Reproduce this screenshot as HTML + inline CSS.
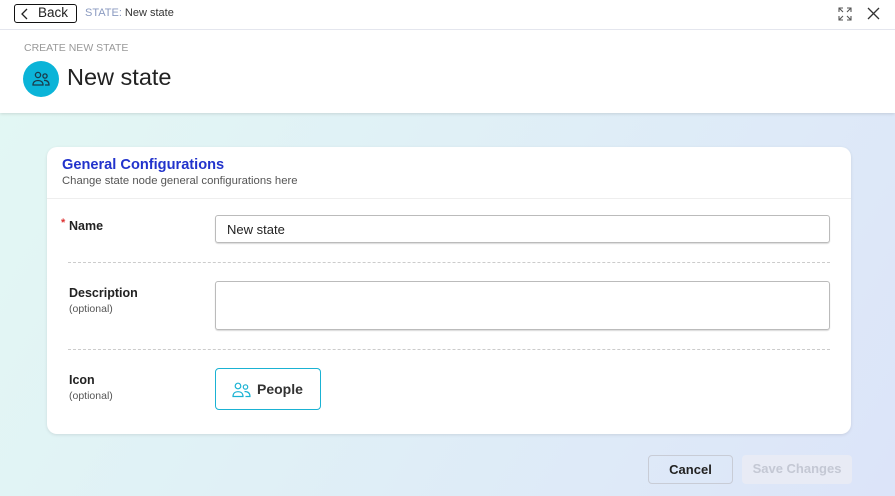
<!DOCTYPE html>
<html><head><style>
*{box-sizing:border-box;margin:0;padding:0}
body{width:895px;height:496px;overflow:hidden;font-family:"Liberation Sans",sans-serif;background:linear-gradient(120deg,#e3f8f3 0%,#e0f1f6 40%,#dce4f9 100%);position:relative;color:#222}
.top{position:absolute;left:0;top:0;width:895px;height:113px;background:#fff;box-shadow:0 1px 3px rgba(0,0,0,.12)}
.bar{height:30px;border-bottom:1px solid #e4e6ee;position:relative}
.back{position:absolute;left:14px;top:4px;width:63px;height:19px;border:1.5px solid #111;border-radius:3px;font-size:13.5px;line-height:16px;padding-left:23px;color:#222}
.back svg{position:absolute;left:5px;top:3px}
.crumb{position:absolute;left:85px;top:7px;font-size:11px;color:#333}
.crumb b{font-weight:normal;color:#8a9ac0}
.sub{position:absolute;left:24px;top:42px;font-size:10.5px;color:#999}
.av{position:absolute;left:23px;top:61px;width:36px;height:36px;border-radius:50%;background:#0bb4d8}
.ttl{position:absolute;left:67px;top:64px;font-size:23.5px;color:#222}
.card{position:absolute;left:47px;top:147px;width:804px;height:287px;background:#fff;border-radius:10px;box-shadow:0 1px 3px rgba(0,0,0,.1)}
.ch{height:52px;border-bottom:1px solid #eee;padding:10px 15px}
.ch h3{font-size:14.6px;color:#2233cc;font-weight:bold}
.ch p{font-size:11.3px;color:#555;margin-top:2px}
.lbl{position:absolute;left:22px;font-size:12.5px;font-weight:bold;color:#222}
.lbl small{display:block;font-weight:normal;font-size:10.5px;color:#555;margin-top:3px}
.inp{position:absolute;left:168px;width:615px;border:1px solid #bbb;border-radius:3px;box-shadow:0 1px 1px rgba(0,0,0,.15)}
.dash{position:absolute;left:21px;width:762px;border-top:1px dashed #ccc}
.btn{position:absolute;border-radius:4px;font-size:13px;font-weight:bold;text-align:center;line-height:28px}
</style></head><body>
<div class="top">
<div class="bar">
<div class="back"><svg width="10" height="12" viewBox="0 0 10 12"><path d="M7 1L2 6l5 5" fill="none" stroke="#222" stroke-width="1.3"/></svg>Back</div>
<div class="crumb"><b>STATE:</b> New state</div>
<svg style="position:absolute;left:838px;top:7px" width="14" height="14" viewBox="0 0 14 14" fill="none" stroke="#555" stroke-width="1.1"><path d="M1 5V1h4M1 1l4 4M13 5V1H9M13 1L9 5M1 9v4h4M1 13l4-4M13 9v4H9M13 13L9 9"/></svg>
<svg style="position:absolute;left:867px;top:7px" width="13" height="13" viewBox="0 0 13 13" stroke="#333" stroke-width="1.3"><path d="M1 1l11 11M12 1L1 12"/></svg>
</div>
<div class="sub">CREATE NEW STATE</div>
<div class="av"><svg style="position:absolute;left:9px;top:10px" width="18" height="16" viewBox="0 0 18 16" fill="none" stroke="#1a3a4a" stroke-width="1.3"><circle cx="6" cy="4" r="2.6"/><circle cx="13" cy="5" r="2.1"/><path d="M1 14c0-3 2-4.5 5-4.5s5 1.5 5 4.5zM12 9.3c3 0 5 1 5 4.7h-4"/></svg></div>
<div class="ttl">New state</div>
</div>
<div class="card">
<div class="ch"><h3>General Configurations</h3><p>Change state node general configurations here</p></div>
<div class="lbl" style="top:72px"><span style="color:#d33;position:absolute;left:-8px;top:-2px;font-size:11px">*</span>Name</div>
<div class="inp" style="top:68px;height:28px;font-size:13px;padding:6px 11px">New state</div>
<div class="dash" style="top:115px"></div>
<div class="lbl" style="top:139px">Description<small>(optional)</small></div>
<div class="inp" style="top:134px;height:49px"></div>
<div class="dash" style="top:202px"></div>
<div class="lbl" style="top:226px">Icon<small>(optional)</small></div>
<div style="position:absolute;left:168px;top:221px;width:106px;height:42px;border:1.5px solid #1ab2d3;border-radius:4px;font-size:14px;font-weight:bold;color:#333;padding:12px 0 0 41px">People
<svg style="position:absolute;left:16px;top:13px" width="19" height="16" viewBox="0 0 19 16" fill="none" stroke="#1ab2d3" stroke-width="1.2"><circle cx="6" cy="4" r="2.8"/><circle cx="13.5" cy="5" r="2.2"/><path d="M1 14.5c0-3 2-4.8 5-4.8s5 1.8 5 4.8zM12.5 9.5c3 0 5.5 1 5.5 5h-4.5"/></svg></div>
</div>
<div class="btn" style="left:648px;top:455px;width:85px;height:29px;border:1px solid #c8ccd6;color:#222">Cancel</div>
<div class="btn" style="left:742px;top:455px;width:110px;height:29px;background:#e8ebf5;color:#c4c8d4">Save Changes</div>
</body></html>
